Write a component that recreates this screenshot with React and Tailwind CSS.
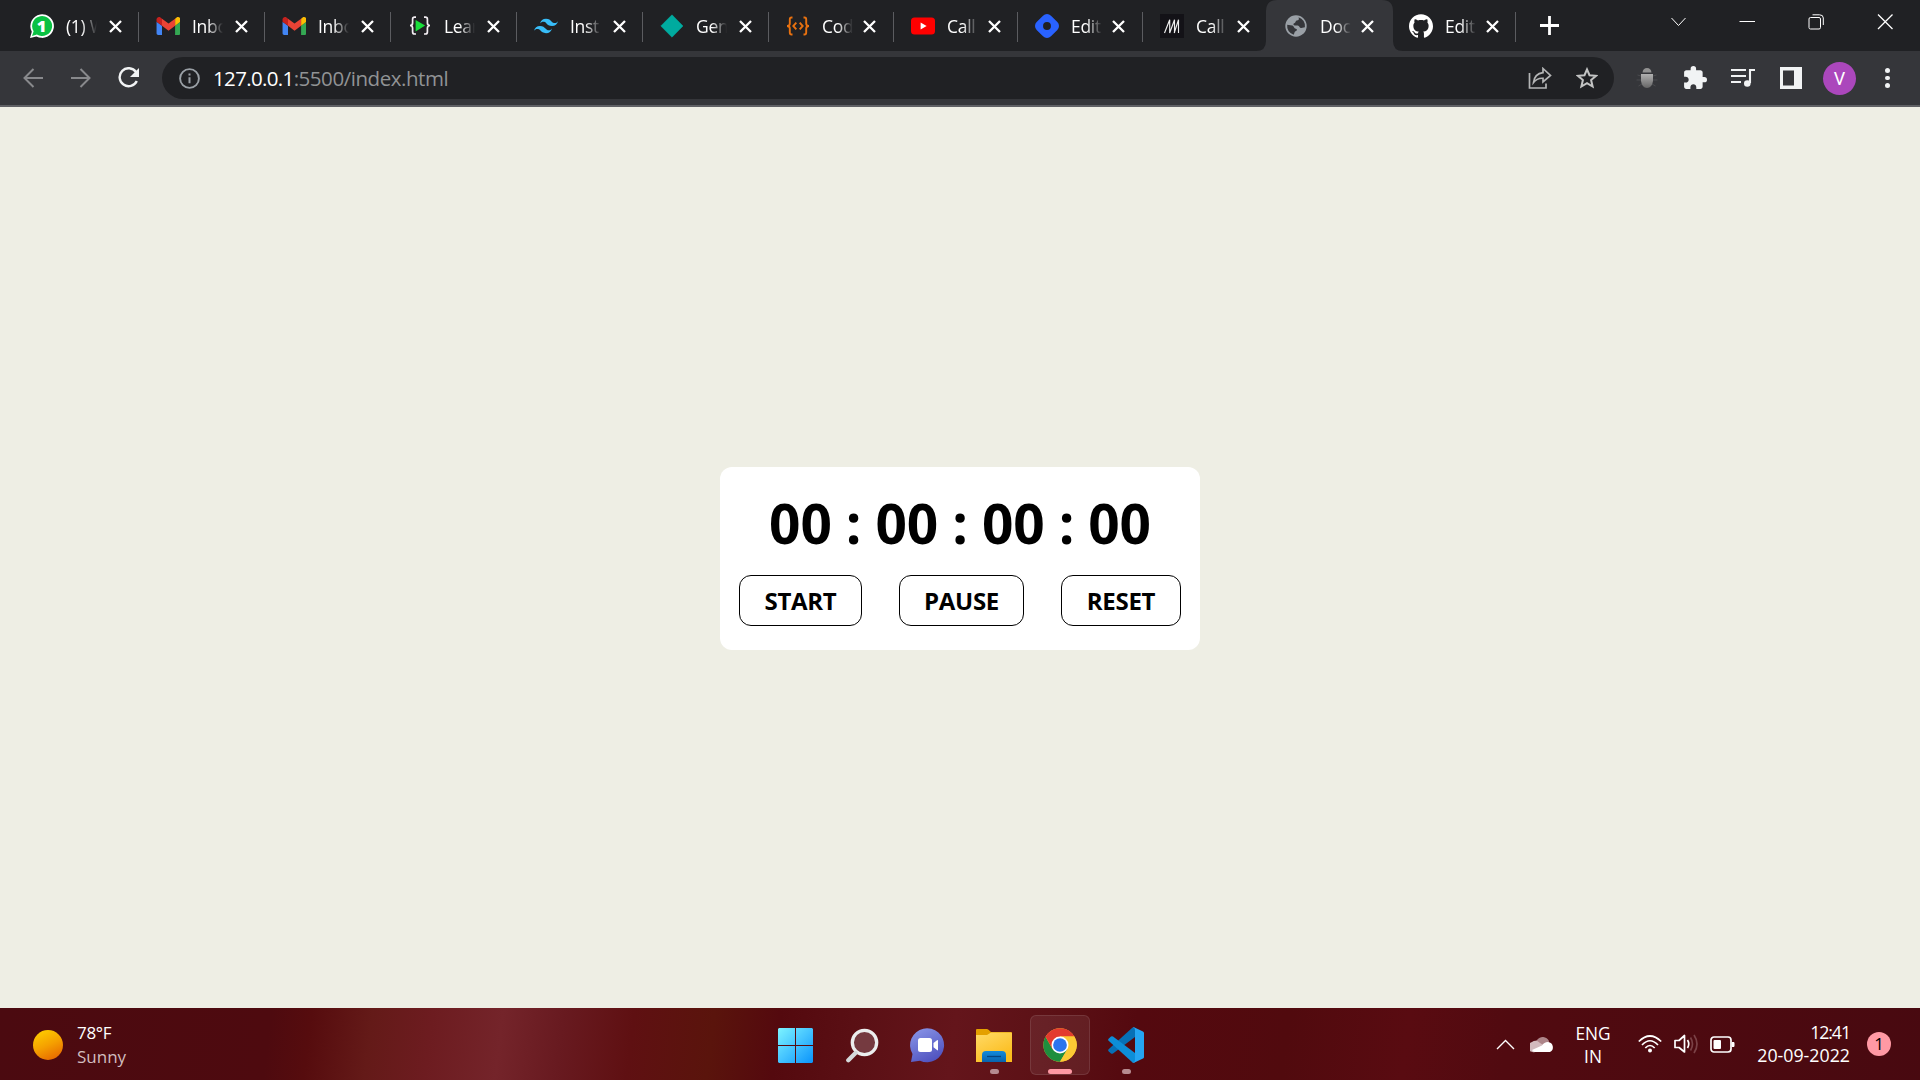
import React from "react";

const Whatsapp = () => (
  <svg width="24" height="24" viewBox="0 0 24 24">
    <path d="M0 24L1.8 17.8A11.8 11.8 0 1 1 6.4 22.4Z" fill="#fff" />
    <path d="M2 22L3.6 17.2A10 10 0 1 1 6.9 20.5Z" fill="#0ac143" />
    <text x="11.6" y="18" textAnchor="middle" fontSize="16.5" fontWeight="800" fill="#fff" fontFamily="Open Sans, Noto Sans, sans-serif">1</text>
  </svg>
);
const Gmail = () => (
  <svg width="24" height="24" viewBox="50 36 88 78">
    <path fill="#4285f4" d="M58 108h14V74L52 59v43c0 3.32 2.69 6 6 6" />
    <path fill="#34a853" d="M120 108h14c3.32 0 6-2.69 6-6V59l-20 15" />
    <path fill="#fbbc04" d="M120 48v26l20-15v-8c0-7.42-8.47-11.65-14.4-7.2" />
    <path fill="#ea4335" d="M72 74V48l24 18 24-18v26L96 92" />
    <path fill="#c5221f" d="M52 51v8l20 15V48l-5.6-4.2c-5.94-4.45-14.4-.22-14.4 7.2" />
  </svg>
);
const Learn = () => (
  <svg width="24" height="24" viewBox="0 0 24 24" fill="none">
    <path d="M8 3.2H6.6Q4.600 3.200 4.600 5.200V9Q4.600 11.500 2 11.500Q4.600 11.500 4.600 14V18Q4.600 20 6.600 20H8M16 3.200H17.400Q19.400 3.200 19.400 5.200V9Q19.400 11.500 22 11.500Q19.400 11.500 19.400 14V18Q19.400 20 17.400 20H16" stroke="#f3eef3" strokeWidth="1.7" />
    <path d="M7.600 6L17.200 11.600 7.600 17.400Z" fill="#19e03b" />
  </svg>
);
const Tailwind = () => (
  <svg width="24" height="24" viewBox="0 0 24 24" fill="#38bdf8">
    <path d="M12 4.800c-3.200 0-5.200 1.600-6 4.800 1.200-1.600 2.600-2.200 4.200-1.800.913.228 1.565.89 2.288 1.624C13.666 10.618 15.027 12 18 12c3.200 0 5.200-1.600 6-4.800-1.200 1.600-2.600 2.200-4.200 1.800-.913-.228-1.565-.89-2.288-1.624C16.337 6.182 14.976 4.800 12 4.800zM6 12c-3.200 0-5.200 1.600-6 4.800 1.200-1.600 2.600-2.200 4.200-1.800.913.228 1.565.89 2.288 1.624C7.666 17.818 9.027 19.200 12 19.200c3.200 0 5.200-1.600 6-4.800-1.200 1.600-2.600 2.200-4.200 1.800-.913-.228-1.565-.89-2.288-1.624C10.337 13.382 8.976 12 6 12z" />
  </svg>
);
const Gem = () => (
  <svg width="24" height="24" viewBox="0 0 24 24"><path d="M12 .8L23 12 12 23.200 .8 12Z" fill="#00ab9f" stroke="#00ab9f" strokeWidth=".5" strokeLinejoin="round" /></svg>
);
const Code = () => (
  <svg width="24" height="24" viewBox="0 0 24 24" fill="none" stroke="#e8710f" strokeWidth="1.900">
    <path d="M6.500 3.500H5.500Q3.800 3.500 3.800 5.200V9.500Q3.800 12 1 12Q3.800 12 3.800 14.500V18.500Q3.800 20.500 5.500 20.500H6.500M17.500 3.500H18.500Q20.200 3.500 20.200 5.200V9.500Q20.200 12 23 12Q20.200 12 20.200 14.500V18.500Q20.200 20.500 18.500 20.500H17.500M10.300 8.600L7.300 12L10.300 15.400M13.700 8.600L16.700 12L13.700 15.400" />
  </svg>
);
const Youtube = () => (
  <svg width="24" height="24" viewBox="0 0 24 24">
    <rect x="0" y="3.500" width="24" height="17" rx="3.500" fill="#f00" />
    <path d="M9.600 8.400L15.600 12 9.600 15.600Z" fill="#fff" />
  </svg>
);
const Hashnode = () => (
  <svg width="24" height="24" viewBox="0 0 24 24" fill="#2962ff">
    <path fillRule="evenodd" d="M22.351 8.019l-6.370-6.370a5.630 5.630 0 0 0-7.962 0l-6.370 6.370a5.630 5.630 0 0 0 0 7.962l6.370 6.370a5.630 5.630 0 0 0 7.962 0l6.370-6.370a5.630 5.630 0 0 0 0-7.962zM12 15.953a3.953 3.953 0 1 1 0-7.906 3.953 3.953 0 0 1 0 7.906z" />
  </svg>
);
const Mark = () => (
  <svg width="24" height="24" viewBox="0 0 24 24">
    <rect width="24" height="24" fill="#131217" />
    <path d="M4.500 19L9.700 5.800V19L14.500 5.800V19M14.200 19L18.500 5.800V19" fill="none" stroke="#eee" strokeWidth="1.150" strokeLinejoin="bevel" />
  </svg>
);
const Globe = () => (
  <svg width="24" height="24" viewBox="0 0 24 24">
    <circle cx="12" cy="12" r="10.700" fill="#9aa0a6" />
    <path d="M14.500 3.200C15.500 5.500 14.600 6.300 12.600 6.400C11.500 6.600 11.800 8.800 10.200 9.200C8.800 9.500 9.300 11.500 11 11.500H13.800C15.500 11.500 15.300 14.300 17.300 14.100L20.900 13.200A9 9 0 0 0 14.500 3.200ZM3.200 10.800L8.300 11.600C10.200 12 9.800 14.600 11.800 14.700C13.600 14.900 13 17 11.500 17.200C10.300 17.500 10.700 19 9.700 20.700A9 9 0 0 1 3.200 10.800Z" fill="#35363a" transform="matrix(-1 0 0 1 24 0) translate(24 0) scale(-1 1)" />
  </svg>
);
const Github = () => (
  <svg width="24" height="24" viewBox="0 0 24 24" fill="#fff">
    <path d="M12 .297c-6.630 0-12 5.373-12 12 0 5.303 3.438 9.800 8.205 11.385.6.113.82-.258.82-.577 0-.285-.010-1.040-.015-2.040-3.338.724-4.042-1.610-4.042-1.610C4.422 18.070 3.633 17.700 3.633 17.700c-1.087-.744.084-.729.084-.729 1.205.084 1.838 1.236 1.838 1.236 1.070 1.835 2.809 1.305 3.495.998.108-.776.417-1.305.76-1.605-2.665-.3-5.466-1.332-5.466-5.930 0-1.310.465-2.380 1.235-3.220-.135-.303-.54-1.523.105-3.176 0 0 1.005-.322 3.300 1.230.96-.267 1.980-.399 3-.405 1.020.006 2.040.138 3 .405 2.280-1.552 3.285-1.230 3.285-1.230.645 1.653.24 2.873.12 3.176.765.840 1.230 1.910 1.230 3.220 0 4.610-2.805 5.625-5.475 5.920.42.360.81 1.096.81 2.220 0 1.606-.015 2.896-.015 3.286 0 .315.21.690.825.570C20.565 22.092 24 17.592 24 12.297c0-6.627-5.373-12-12-12" />
  </svg>
);

const tabs = [
  { icon: Whatsapp, title: "(1) W", w: "w-[126px]", sep: true },
  { icon: Gmail, title: "Inbo", w: "w-[126px]", sep: true },
  { icon: Gmail, title: "Inbo", w: "w-[126px]", sep: true },
  { icon: Learn, title: "Lear", w: "w-[126px]", sep: true },
  { icon: Tailwind, title: "Inst", w: "w-[126px]", sep: true },
  { icon: Gem, title: "Gen", w: "w-[126px]", sep: true },
  { icon: Code, title: "Cod", w: "w-[125px]", tight: true, sep: true },
  { icon: Youtube, title: "Call", w: "w-[124px]", tight: true, sep: true },
  { icon: Hashnode, title: "Edit", w: "w-[125px]", tight: true, sep: true },
  { icon: Mark, title: "Call", w: "w-[124px]", tight: true, sep: false },
  { icon: Globe, title: "Doc", w: "w-[125px]", tight: true, active: true },
  { icon: Github, title: "Edit", w: "w-[124px]", tight: true, sep: true },
];

function Tab({ icon: Icon, title, w, sep, active, tight }) {
  return (
    <div className={`relative flex h-[51px] shrink-0 items-center pl-[17px] ${w}`}>
      {active && (
        <svg className="absolute -left-[11px] top-0" width="148" height="51" viewBox="0 0 148 51">
          <path d="M0 51Q10 51 10 41V11Q10 0 21 0H126Q137 0 137 11V41Q137 51 147 51Z" fill="#35363a" />
        </svg>
      )}
      <span className="relative mt-px h-6 w-6 shrink-0"><Icon /></span>
      <span className="relative ml-3 w-[31px] shrink-0 overflow-hidden whitespace-nowrap text-[17.5px] leading-6 tracking-[-0.3px] text-white [mask-image:linear-gradient(to_right,#000_50%,transparent)]">{title}</span>
      <svg className={`relative mt-px ${tight ? "ml-[10px]" : "ml-3"}`} width="13" height="13" viewBox="0 0 13 13"><path d="M1 1L12 12M12 1L1 12" stroke="#fff" strokeWidth="2.300" /></svg>
      {sep && <span className="absolute right-0 top-[12px] h-[30px] w-px bg-[#5b5c60]" />}
    </div>
  );
}

function Toolbar() {
  return (
    <div className="flex h-[54px] items-center bg-[#35363a]">
      <svg className="ml-[23px]" width="20" height="20" viewBox="0 0 20 20" fill="none" stroke="#88898c" strokeWidth="2"><path d="M20 10H2M10.500 1L1.500 10L10.500 19" /></svg>
      <svg className="ml-7" width="20" height="20" viewBox="0 0 20 20" fill="none" stroke="#88898c" strokeWidth="2"><path d="M0 10H18M9.500 1L18.500 10L9.500 19" /></svg>
      <svg className="ml-[27px]" width="22" height="22" viewBox="0 0 22 22"><path d="M18 5A9 9 0 1 0 18.800 14" fill="none" stroke="#f1f3f4" strokeWidth="2.400" /><path d="M21 1V10H12Z" fill="#f1f3f4" /></svg>
      <div className="ml-[22px] flex h-[42px] w-[1452px] items-center rounded-full bg-[#202124] pl-[17px]">
        <svg width="21" height="21" viewBox="0 0 21 21"><circle cx="10.500" cy="10.500" r="9.400" fill="none" stroke="#9aa0a6" strokeWidth="1.900" /><path d="M9.500 5.500h2v2h-2zM9.500 9.300h2v6h-2z" fill="#9aa0a6" /></svg>
        <span className="ml-[13px] w-[239px] whitespace-nowrap text-[20.500px] leading-8 tracking-[-0.45px] text-[#919395]"><span className="tracking-[-0.65px] text-white">127.0.0.1</span>:5500/index.html</span>
        <svg className="ml-auto" width="24" height="22" viewBox="0 0 24 22" fill="none" stroke="#b4b5b6" strokeWidth="1.700"><path d="M1.500 6V21H18V16.500" /><path d="M15 1.500L22.500 8.500L15 15V11.300C11 11 8 12.300 5.500 15.500C6.200 10 10 6.300 15 5.700Z" /></svg>
        <svg className="ml-6 mr-4" width="22" height="22" viewBox="0 0 22 22"><path d="M11 2.400L13.500 8.200L20 8.800L15.100 13.100L16.600 19.500L11 16.100L5.400 19.500L6.900 13.100L2 8.800L8.500 8.200Z" fill="none" stroke="#c3c4c4" strokeWidth="2" /></svg>
      </div>
      <svg className="ml-[22px]" width="22" height="22" viewBox="0 0 22 22"><defs><linearGradient id="bug" x2="0" y2="1"><stop stopColor="#b0b0b0" /><stop offset="1" stopColor="#666" /></linearGradient></defs><path d="M1.500 8L5 9M20.500 8L17 9M.5 13H5M21.500 13H17M2.500 19L6 17M19.500 19L16 17" stroke="#4a4b4e" strokeWidth="1" /><path d="M6.500 5.500Q7 1 11 1Q15 1 15.500 5.500Z" fill="#929292" /><path d="M5 7H17V14Q16 21 11 21Q6 21 5 14Z" fill="url(#bug)" /></svg>
      <svg className="ml-[25px]" width="24" height="24" viewBox="1 1 22 22" fill="#f1f3f4"><path d="M20.500 11H19V7c0-1.100-.9-2-2-2h-4V3.500a2.500 2.500 0 0 0-5 0V5H4c-1.100 0-1.990.9-1.990 2v3.800H3.500c1.490 0 2.700 1.210 2.700 2.700s-1.210 2.700-2.700 2.700H2V20c0 1.100.9 2 2 2h3.800v-1.500c0-1.490 1.210-2.700 2.700-2.700s2.700 1.210 2.700 2.700V22H17c1.100 0 2-.9 2-2v-4h1.500a2.500 2.500 0 0 0 0-5z" /></svg>
      <svg className="ml-6" width="24" height="20" viewBox="0 0 24 20" fill="none" stroke="#f1f3f4" strokeWidth="2.100"><path d="M0 2H15M0 8H15M0 14H10M24 2H19V15" /><circle cx="16.300" cy="15.500" r="3.300" fill="#f1f3f4" stroke="none" /></svg>
      <svg className="ml-[25px]" width="22" height="22" viewBox="0 0 22 22"><rect width="22" height="22" fill="#f1f3f4" /><rect x="3" y="3.500" width="11" height="15" fill="#35363a" /></svg>
      <span className="ml-[21px] flex h-[33px] w-[33px] items-center justify-center rounded-full bg-[#ab47bc] pt-px font-['Roboto',sans-serif] text-[18px] text-white">V</span>
      <span className="ml-[29px] flex flex-col gap-[3px]"><i className="h-[4.500px] w-[4.500px] rounded-full bg-[#f1f3f4]" /><i className="h-[4.500px] w-[4.500px] rounded-full bg-[#f1f3f4]" /><i className="h-[4.500px] w-[4.500px] rounded-full bg-[#f1f3f4]" /></span>
    </div>
  );
}

const Button = ({ label, w }) => (
  <button className={`flex h-[51px] items-center justify-center rounded-[12px] border border-black text-[24px] font-bold leading-none tracking-[-0.3px] text-black ${w}`}>{label}</button>
);

const StartIcon = () => (
  <svg width="35" height="35" viewBox="0 0 35 35"><defs><linearGradient id="win" x2="1" y2="1"><stop stopColor="#7df4ff" /><stop offset=".5" stopColor="#45c4ff" /><stop offset="1" stopColor="#0a94fb" /></linearGradient></defs><path d="M1 0H17V17H0V1ZM18 0H34L35 1V17H18ZM0 18H17V35H1L0 34ZM18 18H35V34L34 35H18Z" fill="url(#win)" /></svg>
);
const SearchIcon = () => (
  <svg width="33" height="35" viewBox="0 0 33 35"><circle cx="18.500" cy="14.500" r="12.200" fill="#753a40" stroke="#eceeee" strokeWidth="3.300" /><path d="M9.500 25L2.300 32.300" stroke="#d5dadb" strokeWidth="4.300" strokeLinecap="round" /></svg>
);
const ChatIcon = () => (
  <svg width="35" height="35" viewBox="0 0 35 35"><defs><linearGradient id="chat" x1=".2" x2=".7" y2="1"><stop stopColor="#8793e6" /><stop offset="1" stopColor="#4e50be" /></linearGradient></defs><path d="M1 34L2.500 26A17 17 0 1 1 10 32.700Z" fill="url(#chat)" /><rect x="8" y="10" width="14" height="14" rx="2.500" fill="#fff" /><path d="M23.500 15L27 12.200Q28 11.500 28 13V21.500Q28 23 27 22L23.500 19.300Z" fill="#fff" /></svg>
);
const FolderIcon = () => (
  <svg width="36" height="34" viewBox="0 0 36 34"><defs><linearGradient id="fold" x2=".6" y2="1"><stop stopColor="#ffda67" /><stop offset="1" stopColor="#fbbc1c" /></linearGradient><linearGradient id="fb" x2="0" y2="1"><stop stopColor="#128bdc" /><stop offset="1" stopColor="#0963ad" /></linearGradient></defs><path d="M0 1Q0 0 1 0H11Q12 0 15 3H35Q36 3 36 4V12H0Z" fill="#e4a000" /><path d="M0 6H11L15 3.500H35Q36 3.500 36 4.500V33H0Z" fill="url(#fold)" /><path d="M6 33V26Q6 22 10 22H26Q30 22 30 26V33Z" fill="url(#fb)" /><path d="M11 27.500H25" stroke="#06447e" strokeWidth="1.300" /></svg>
);
const ChromeIcon = () => (
  <svg width="34" height="34" viewBox="0 0 48 48"><circle cx="24" cy="24" r="23.500" fill="#fcc934" /><path d="M24 24L13.600 30L3.600 12.300A23.500 23.500 0 0 0 24 47.500L34.400 30Z" fill="#1e8e3e" /><path d="M24 12H44.400A23.500 23.500 0 0 0 3.600 12.300L13.600 30L24 24Z" fill="#e33b2e" /><path d="M24 12H44.400A23.500 23.500 0 0 1 24 47.500L34.400 30L24 24Z" fill="#fcc934" /><circle cx="24" cy="24" r="12" fill="#fff" /><circle cx="24" cy="24" r="9.700" fill="#2a74ed" /></svg>
);
const CodeIcon = () => (
  <svg width="36" height="36" viewBox="0 0 36 36"><path d="M27 1V10L5 26.500Q4 27.200 3 26.500L.6 24.300Q-.3 23.300 .6 22.300L24 1Q25.500 0 27 1Z" fill="#0770b6" /><path d="M27 35V26L5 9.500Q4 8.800 3 9.500L.6 11.700Q-.3 12.700 .6 13.700L24 35Q25.500 36 27 35Z" fill="#0d8ed8" /><path d="M26 .2L35 4.500Q36 5 36 6V30Q36 31 35 31.500L26 35.800Q25 36 24.200 35.200Q27 36 27 33V3Q27 0 24.200 .8Q25 0 26 .2Z" fill="#25a5f2" /></svg>
);

function Taskbar() {
  return (
    <footer className="flex h-[72px] items-center bg-[linear-gradient(97deg,#4b0a10_0px,#4e0a0f_270px,#560c0e_310px,#641a18_370px,#6d1c20_430px,#74242a_500px,#681a20_560px,#5f1012_630px,#5a140c_710px,#54090e_775px,#5b1015_860px,#64151b_950px,#5c1116_1040px,#54090f_1130px,#510a0e_1280px,#590b11_1400px,#510a10_1500px,#480910_1920px)] text-white">
      <span className="ml-[33px] mt-[2px] h-[30px] w-[30px] rounded-full bg-[linear-gradient(155deg,#ffd400,#f5a000_50%,#e35c00)]" />
      <div className="ml-[14px] mt-[2px] w-[120px] text-[17px] leading-6"><div className="tracking-[-0.3px]">78°F</div><div className="text-[#d2bdbf]">Sunny</div></div>
      <div className="ml-[566px] flex h-full w-[400px] items-center">
        <span className="ml-[15px] pt-[3px]"><StartIcon /></span>
        <span className="ml-[33px] pt-[3px]"><SearchIcon /></span>
        <span className="ml-[31px] pt-[3px]"><ChatIcon /></span>
        <span className="relative ml-[31px] pt-[3px]"><FolderIcon /><i className="absolute -bottom-[11px] left-[14px] h-[5px] w-[9px] rounded-full bg-[#b68b90]" /></span>
        <span className="relative ml-[18px] mt-[2px] flex h-[60px] w-[60px] items-center justify-center rounded-md border border-white/10 bg-white/[0.07]"><ChromeIcon /><i className="absolute bottom-0 left-[17px] h-[5px] w-6 rounded-full bg-[#ff99a4]" /></span>
        <span className="relative ml-[18px] pt-[2px]"><CodeIcon /><i className="absolute -bottom-[11px] left-[14px] h-[5px] w-[9px] rounded-full bg-[#b68b90]" /></span>
      </div>
      <svg className="ml-[333px]" width="19" height="11" viewBox="0 0 19 11"><path d="M1 10L9.500 1.500L18 10" fill="none" stroke="#fff" strokeWidth="1.400" /></svg>
      <svg className="ml-[15px]" width="25" height="17" viewBox="0 0 25 17"><path d="M4 12A6 6 0 0 1 7 4A7 7 0 0 1 19 5L18 12Z" fill="#ad8589" /><path d="M5 16A5 5 0 0 1 2 6Q6 3 10 7L20 13L5 16Z" fill="#d2babd" /><path d="M2 14L12 9.500Q14 6 18 6A5.300 5.300 0 0 1 20 16H5Q3 16 2 14Z" fill="#fff" /></svg>
      <div className="ml-[18px] mt-px w-[40px] text-center text-[17.300px] leading-[23px]"><div>ENG</div><div>IN</div></div>
      <svg className="ml-[25px]" width="24" height="18" viewBox="0 0 24 18" fill="none" stroke="#fff" strokeWidth="1.700"><path d="M.8 6.500Q12-4.500 23.200 6.500M4 10Q12 1.500 20 10M7.300 13Q12 8 16.700 13" /><circle cx="12" cy="15.500" r="2" fill="#fff" stroke="none" /></svg>
      <svg className="ml-3" width="25" height="20" viewBox="0 0 25 20" fill="none" stroke="#fff" strokeWidth="1.700"><path d="M1 6.500H5L10.500 1.500V18L5 13.500H1Z" strokeLinejoin="round" /><path d="M13.500 6Q16 10 13.500 14" /><path d="M16.500 3.500Q20.500 10 16.500 16.500M20 1Q26 10 20 19" stroke="#7a4146" /></svg>
      <svg className="ml-[11px]" width="25" height="17" viewBox="0 0 25 17"><rect x="1" y="1" width="20" height="15" rx="3" fill="none" stroke="#fff" strokeWidth="1.700" /><rect x="3.500" y="4" width="7.500" height="9" rx="1" fill="#fff" /><path d="M22 6.500H24V10.500H22Z" fill="#fff" stroke="#fff" /></svg>
      <div className="ml-[15px] w-[100px] text-right text-[17.800px] leading-[23px]"><div className="tracking-[-1.100px]">12:41</div><div className="whitespace-nowrap">20-09-2022</div></div>
      <span className="ml-[17px] flex h-6 w-6 items-center justify-center rounded-full bg-[#ff99a4] text-[17px] text-black">1</span>
    </footer>
  );
}

export default function App() {
  return (
    <div className="flex h-[1080px] w-[1920px] flex-col overflow-hidden bg-[#eeeee4] font-['Open_Sans','Noto_Sans',sans-serif]">
      <header>
        <div className="flex h-[51px] bg-[#202124] pl-[13px]">
          {tabs.map((t, i) => <Tab key={i} {...t} />)}
          <svg className="ml-[24px] mt-[16px]" width="19" height="19" viewBox="0 0 19 19"><path d="M9.500 0V19M0 9.500H19" stroke="#fff" strokeWidth="2.800" /></svg>
          <div className="ml-auto mr-[27px] mt-[14px] flex items-start gap-[53px]">
            <svg width="16" height="15" viewBox="0 0 16 15" fill="none" stroke="#fff" strokeWidth="1"><path d="M1.500 4L8.500 11.500L15.500 4" /></svg>
            <svg width="16" height="15" viewBox="0 0 16 15"><path d="M0.500 7.500H16" stroke="#fff" strokeWidth="1" /></svg>
            <svg width="16" height="16" viewBox="0 0 16 16" fill="none" stroke="#fff" strokeWidth="1"><rect x="1" y="3.500" width="11.500" height="11.500" rx="1.500" /><path d="M4.500 .8H11.500Q15.300 .8 15.300 4V11" /></svg>
            <svg width="16" height="16" viewBox="0 0 16 16" stroke="#fff" strokeWidth="1.300"><path d="M1 .5L15.500 15M15.500 .5L1 15" /></svg>
          </div>
        </div>
        <Toolbar />
        <div className="h-[2px] bg-[#5f6064]" />
      </header>
      <main className="flex grow justify-center pt-[360px]">
        <section className="flex h-[183px] w-[480px] flex-col items-center rounded-[12px] bg-white">
          <h1 className="mt-[15px] flex h-[80px] items-center whitespace-pre text-[55px] font-bold leading-none tracking-[-0.150px] text-black">00 : 00 : 00 : 00</h1>
          <div className="mt-[13px] flex w-full justify-between px-[19px]">
            <Button label="START" w="w-[123px]" />
            <Button label="PAUSE" w="w-[125px]" />
            <Button label="RESET" w="w-[120px]" />
          </div>
        </section>
      </main>
      <Taskbar />
    </div>
  );
}
